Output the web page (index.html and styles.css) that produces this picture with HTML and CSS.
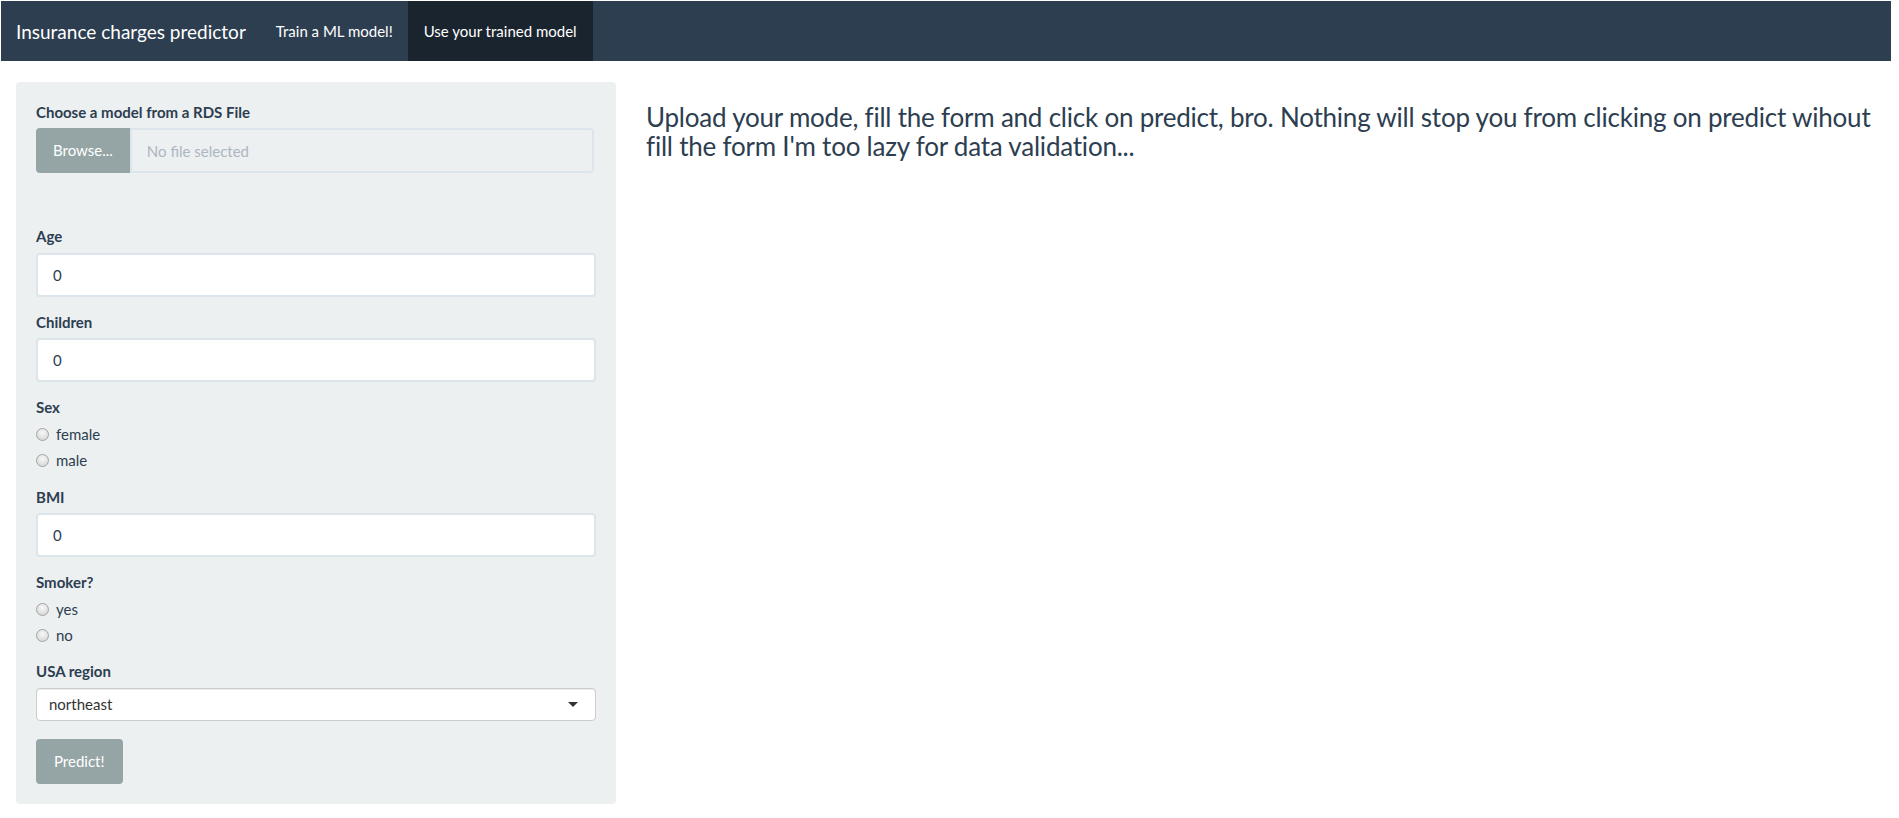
FILE: index.html
```html
<!DOCTYPE html>
<html lang="en">
<head>
<meta charset="utf-8">
<title>Insurance charges predictor</title>
<link rel="stylesheet" href="styles.css">
</head>
<body>
<div class="page">
  <nav class="navbar">
    <span class="navbar-brand">Insurance charges predictor</span>
    <ul class="navbar-nav">
      <li><a href="#">Train a ML model!</a></li>
      <li class="active"><a href="#">Use your trained model</a></li>
    </ul>
  </nav>
  <div class="row">
    <div class="col-side">
      <form class="well">
        <div class="form-group file-group">
          <label class="control-label">Choose a model from a RDS File</label>
          <div class="input-group">
            <span class="btn btn-default btn-file">Browse...</span>
            <input type="text" class="form-control file-name" placeholder="No file selected" readonly>
          </div>
          <div class="file-progress"></div>
        </div>
        <div class="form-group">
          <label class="control-label">Age</label>
          <input type="number" class="form-control" value="0">
        </div>
        <div class="form-group">
          <label class="control-label">Children</label>
          <input type="number" class="form-control" value="0">
        </div>
        <div class="form-group">
          <label class="control-label">Sex</label>
          <div class="options">
            <div class="radio"><label><input type="radio" name="sex"><span>female</span></label></div>
            <div class="radio"><label><input type="radio" name="sex"><span>male</span></label></div>
          </div>
        </div>
        <div class="form-group">
          <label class="control-label">BMI</label>
          <input type="number" class="form-control" value="0">
        </div>
        <div class="form-group">
          <label class="control-label">Smoker?</label>
          <div class="options">
            <div class="radio"><label><input type="radio" name="smoker"><span>yes</span></label></div>
            <div class="radio"><label><input type="radio" name="smoker"><span>no</span></label></div>
          </div>
        </div>
        <div class="form-group select-group">
          <label class="control-label">USA region</label>
          <div class="selectize-input">
            <span class="item">northeast</span>
            <span class="caret"></span>
          </div>
        </div>
        <button type="button" class="btn btn-default btn-predict">Predict!</button>
      </form>
    </div>
    <div class="col-main">
      <h3>Upload your mode, fill the form and click on predict, bro. Nothing will stop you from clicking on predict wihout fill the form I'm too lazy for data validation...</h3>
    </div>
  </div>
</div>
</body>
</html>
```
FILE: styles.css
```css
* {
  box-sizing: border-box;
}

html, body {
  margin: 0;
  padding: 0;
  background: #ffffff;
}

body {
  padding: 1px 0 0 1px;
  font-family: Lato, "Helvetica Neue", Arial, sans-serif;
  font-size: 15px;
  line-height: 1.428571429;
  color: #2c3e50;
}

.page {
  width: 1890px;
}

/* Navbar */
.navbar {
  display: flex;
  align-items: stretch;
  height: 60px;
  margin-bottom: 21px;
  background: #2c3e50;
}

.navbar-brand {
  padding: 19.5px 15px;
  font-size: 19px;
  line-height: 21px;
  color: #ffffff;
}

.navbar-nav {
  display: flex;
  margin: 0;
  padding: 0;
  list-style: none;
}

.navbar-nav a {
  display: block;
  padding: 19.5px 15px;
  line-height: 21px;
  color: #ffffff;
  text-decoration: none;
}

.navbar-nav .active a {
  padding: 19.5px 16px;
  background: #1a242f;
}

/* Columns */
.row {
  display: grid;
  grid-template-columns: 630px 1260px;
}

.col-side,
.col-main {
  padding: 0 15px;
}

/* Well */
.well {
  margin: 0 0 20px;
  padding: 19px;
  background: #ecf0f1;
  border: 1px solid transparent;
  border-radius: 4px;
}

.form-group {
  margin-bottom: 15px;
}

.control-label {
  display: block;
  margin-bottom: 5px;
  font-weight: 700;
  line-height: 21.43px;
}

.form-control {
  display: block;
  width: 100%;
  height: 44px;
  padding: 10px 15px;
  font-family: inherit;
  font-size: 15px;
  line-height: 1.428571429;
  color: #2c3e50;
  background: #ffffff;
  border: 2px solid #dce4ec;
  border-radius: 4px;
  outline: none;
  -moz-appearance: textfield;
}

.form-control::-webkit-outer-spin-button,
.form-control::-webkit-inner-spin-button {
  -webkit-appearance: none;
  margin: 0;
}

.form-control::placeholder {
  color: #acb6c0;
}

/* File input */
.input-group {
  display: flex;
  height: 45px;
}

.input-group .form-control {
  height: 45px;
}

.btn {
  display: inline-block;
  padding: 10px 15px;
  font-family: inherit;
  font-size: 15px;
  line-height: 1.428571429;
  text-align: center;
  white-space: nowrap;
  border: 2px solid transparent;
  border-radius: 4px;
  cursor: pointer;
}

.btn-default {
  color: #ffffff;
  background: #95a5a6;
  border-color: #95a5a6;
}

.btn-predict {
  padding: 10px 16px;
}

.btn-file {
  flex: none;
  border-radius: 4px 0 0 4px;
}

.file-name {
  flex: 1;
  margin-right: 2px;
  background: #ecf0f1;
  border-radius: 0 4px 4px 0;
}

.file-progress {
  height: 21px;
  margin-top: 17px;
  visibility: hidden;
}

/* Radios */
.options {
  display: flex;
  flex-direction: column;
  gap: 5px;
}

.radio label {
  display: flex;
  align-items: flex-start;
  min-height: 21.43px;
  line-height: 21.43px;
  cursor: pointer;
}

.radio input {
  -webkit-appearance: none;
  appearance: none;
  flex: none;
  width: 13px;
  height: 13px;
  margin: 4px 7px 0 0;
  border: 1px solid #a3a3a3;
  border-radius: 50%;
  background: radial-gradient(circle at 50% 35%, #f8f8f8 0%, #e2e2e2 55%, #d0d0d0 100%);
}

/* Select */
.select-group {
  margin-bottom: 18px;
}

.selectize-input {
  display: flex;
  align-items: center;
  justify-content: space-between;
  height: 33px;
  padding: 6px 17px 6px 12px;
  font-size: 15px;
  line-height: 20px;
  color: #333333;
  background: #ffffff;
  border: 1px solid #cccccc;
  border-radius: 4px;
  box-shadow: inset 0 1px 1px rgba(0, 0, 0, 0.075);
}

.caret {
  width: 0;
  height: 0;
  border-style: solid;
  border-width: 5px 5px 0 5px;
  border-color: #333333 transparent transparent transparent;
}

/* Main */
h3 {
  margin: 21px 0 10.5px;
  font-size: 26px;
  font-weight: 400;
  line-height: 1.1;
  letter-spacing: -0.22px;
  color: #2c3e50;
}
```
